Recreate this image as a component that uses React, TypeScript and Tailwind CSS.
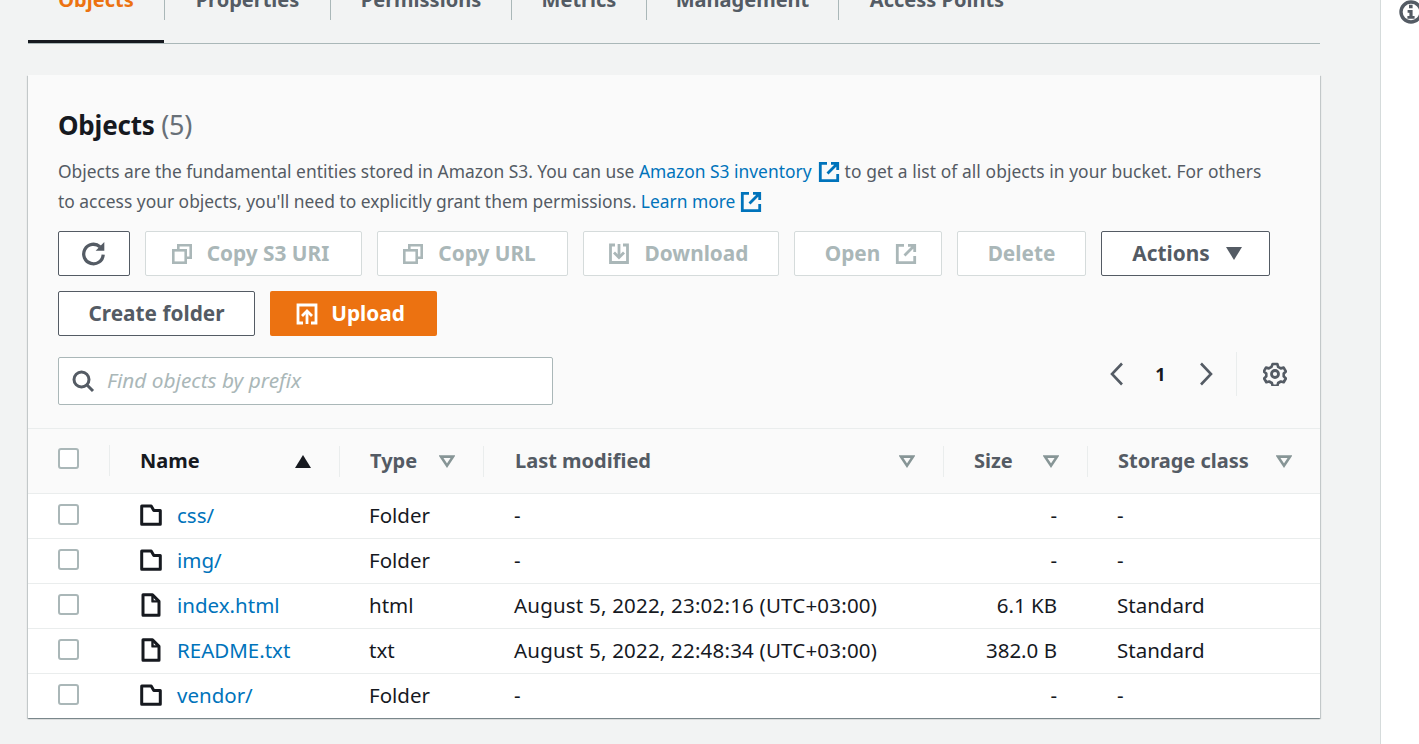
import React from 'react';

const tabs = [
  { label: 'Objects', w: 'w-[137px]', active: true },
  { label: 'Properties', w: 'w-[166px]' },
  { label: 'Permissions', w: 'w-[181px]' },
  { label: 'Metrics', w: 'w-[135px]' },
  { label: 'Management', w: 'w-[192px]' },
  { label: 'Access Points', w: 'w-[196px]' },
];

const rows = [
  { name: 'css/', type: 'Folder', modified: '-', size: '-', storage: '-', folder: true },
  { name: 'img/', type: 'Folder', modified: '-', size: '-', storage: '-', folder: true },
  { name: 'index.html', type: 'html', modified: 'August 5, 2022, 23:02:16 (UTC+03:00)', size: '6.1 KB', storage: 'Standard', folder: false },
  { name: 'README.txt', type: 'txt', modified: 'August 5, 2022, 22:48:34 (UTC+03:00)', size: '382.0 B', storage: 'Standard', folder: false },
  { name: 'vendor/', type: 'Folder', modified: '-', size: '-', storage: '-', folder: true },
];

const ExternalIcon = ({ className }: { className?: string }) => (
  <svg viewBox="0 0 22 22" fill="none" stroke="currentColor" strokeWidth="2.8" className={className}>
    <path d="M9 2.3H2.3v17.4h17.4V13" />
    <path d="M13 2.3h6.7V9M19.7 2.3 9.5 12.5" />
  </svg>
);

const CopyIcon = () => (
  <svg viewBox="0 0 20 20" fill="none" stroke="currentColor" strokeWidth="2.6" className="w-5 h-5 shrink-0">
    <rect x="1.3" y="6.3" width="12.4" height="12.4" />
    <path d="M6.3 6V1.3h12.4v12.4H14" />
  </svg>
);

const CheckBox = () => <div className="w-[21px] h-[21px] bg-white border-2 border-[#aab7b8] rounded-[3px]" />;

const FilterCaret = () => (
  <svg viewBox="0 0 16 13" className="w-4 h-[13px]" fill="none" stroke="#879596" strokeWidth="2.6">
    <path d="M2 1.6h12L8 10.6z" />
  </svg>
);

const FolderIcon = () => (
  <svg viewBox="0 0 22 22" fill="none" stroke="#16191f" strokeWidth="3" strokeLinejoin="round" className="w-[22px] h-[22px]">
    <path d="M1.7 2h9.5l2.6 4.4h6.5v13.8H1.7z" />
  </svg>
);

const FileIcon = () => (
  <svg viewBox="0 0 20 24" fill="none" stroke="#16191f" strokeWidth="3" strokeLinejoin="round" className="w-5 h-6">
    <path d="M2 1.7h9.5L18 8.4v13.9H2z" />
    <path d="M11.5 2v6.4H18" strokeWidth="2.4" />
  </svg>
);

const App: React.FC = () => {
  return (
    <div className="w-[1419px] h-[744px] overflow-hidden flex font-['Noto_Sans',sans-serif] text-[#16191f]">
      <div className="w-[1380px] shrink-0 bg-[#f2f3f3] pl-7 pr-[60px]">
        <div className="h-11 border-b border-[#aab7b8] relative flex items-start">
          {tabs.map((tab, i) => (
            <div
              key={tab.label}
              className={`${tab.w} h-5 flex items-center justify-center text-[20px] font-bold leading-none ${i < tabs.length - 1 ? 'border-r border-[#aab7b8]' : ''} ${tab.active ? 'text-[#ec7211]' : 'text-[#545b64]'}`}
            >
              <span className="-translate-y-[10px]">{tab.label}</span>
            </div>
          ))}
          <div className="absolute left-0 bottom-0 w-[136px] h-[3px] bg-[#16191f]" />
        </div>

        <div className="mt-[31px] bg-white shadow-[0_1px_1px_0_rgba(0,28,36,0.3),1px_1px_1px_0_rgba(0,28,36,0.15),-1px_1px_1px_0_rgba(0,28,36,0.15)]">
          <div className="bg-[#fafafa] h-[354px] pl-[30px] pr-[33px] pt-[32px] border-b border-[#eaeded]">
            <h1 className="text-[26px] leading-9 font-bold tracking-[-0.2px]">
              Objects <span className="font-normal text-[#687078] text-[27px]">(5)</span>
            </h1>
            <p className="mt-[13px] text-[17.4px] leading-[30px] text-[#545b64] w-[1215px]">
              Objects are the fundamental entities stored in Amazon S3. You can use{' '}
              <span className="text-[#0073bb]">
                Amazon S3 inventory <ExternalIcon className="inline w-[22px] h-[22px] align-[-5px] ml-[2px]" />
              </span>{' '}
              <span className="tracking-[0.08px]">to get a list of all objects in your bucket. For others</span> to access your objects, you'll need to explicitly grant them permissions.{' '}
              <span className="text-[#0073bb]">
                Learn more <ExternalIcon className="inline w-[22px] h-[22px] align-[-5px]" />
              </span>
            </p>

            <div className="mt-[15px] flex gap-[15px] text-[20.8px] font-bold">
              <button className="w-[72px] h-[45px] flex items-center justify-center bg-white border border-[#545b64] rounded-[2px] text-[#545b64]">
                <svg viewBox="0 0 24 24" fill="none" stroke="currentColor" strokeWidth="3" className="w-[26px] h-[26px]">
                  <path d="M20.5 12.5a9 9 0 1 1-3-7.2" />
                  <path d="M21.5 1v8h-8" fill="currentColor" stroke="none" />
                </svg>
              </button>
              <button className="w-[217px] h-[45px] pr-[6px] flex items-center justify-center gap-[15px] bg-white border border-[#d5dbdb] rounded-[2px] text-[#aab7b8]">
                <CopyIcon /><span>Copy S3 URI</span>
              </button>
              <button className="w-[191px] h-[45px] pr-[6px] flex items-center justify-center gap-[15px] bg-white border border-[#d5dbdb] rounded-[2px] text-[#aab7b8]">
                <CopyIcon /><span>Copy URL</span>
              </button>
              <button className="w-[196px] h-[45px] pr-[6px] flex items-center justify-center gap-[15px] bg-white border border-[#d5dbdb] rounded-[2px] text-[#aab7b8]">
                <svg viewBox="0 0 22 22" fill="none" stroke="currentColor" strokeWidth="2.8" className="w-[22px] h-[22px] shrink-0">
                  <path d="M7 2H2.5v17.5h17V2H15" />
                  <path d="M11 1v12" />
                  <path d="M6 9.5l5 5 5-5" />
                </svg>
                <span>Download</span>
              </button>
              <button className="w-[148px] h-[45px] pl-[6px] flex items-center justify-center gap-[15px] bg-white border border-[#d5dbdb] rounded-[2px] text-[#aab7b8]">
                <span>Open</span><ExternalIcon className="w-[22px] h-[22px]" />
              </button>
              <button className="w-[129px] h-[45px] flex items-center justify-center bg-white border border-[#d5dbdb] rounded-[2px] text-[#aab7b8]">
                Delete
              </button>
              <button className="w-[169px] h-[45px] pl-[3px] flex items-center justify-center gap-[16px] bg-white border border-[#545b64] rounded-[2px] text-[#545b64]">
                <span>Actions</span>
                <svg viewBox="0 0 16 13" className="w-4 h-[13px]" fill="currentColor"><path d="M0 0h16L8 13z" /></svg>
              </button>
            </div>

            <div className="mt-[15px] flex gap-[15px] text-[20.8px] font-bold">
              <button className="w-[197px] h-[45px] bg-white border border-[#545b64] rounded-[2px] text-[#545b64]">Create folder</button>
              <button className="w-[167px] h-[45px] pr-[6px] flex items-center justify-center gap-[13px] bg-[#ec7211] rounded-[2px] text-white">
                <svg viewBox="0 0 22 22" fill="none" stroke="currentColor" strokeWidth="2.8" className="w-[22px] h-[22px] shrink-0">
                  <path d="M7 20H2V2h18v18h-5" />
                  <path d="M11 21V9" />
                  <path d="M6 13l5-5 5 5" />
                </svg>
                <span>Upload</span>
              </button>
            </div>

            <div className="mt-[21px] flex items-start justify-between">
              <div className="w-[495px] h-12 flex items-center gap-3 bg-white border border-[#aab7b8] rounded-[2px] pl-[12px]">
                <svg viewBox="0 0 24 24" fill="none" stroke="#545b64" strokeWidth="3" className="w-6 h-6 shrink-0">
                  <circle cx="10.5" cy="10.5" r="7.5" />
                  <path d="M16 16l6 6" />
                </svg>
                <span className="text-[20.8px] italic text-[#aab7b8]">Find objects by prefix</span>
              </div>
              <div className="flex items-center h-11 -mt-[5px]">
                <svg viewBox="0 0 16 24" fill="none" stroke="#545b64" strokeWidth="2.6" className="w-4 h-6">
                  <path d="M13 1.5 3 12l10 10.5" />
                </svg>
                <span className="w-[73px] pr-[2px] text-center text-[18px] font-bold text-[#16191f]">1</span>
                <svg viewBox="0 0 16 24" fill="none" stroke="#545b64" strokeWidth="2.6" className="w-4 h-6">
                  <path d="M3 1.5 13 12 3 22.5" />
                </svg>
                <div className="ml-[22px] w-px h-11 bg-[#eaeded]" />
                <svg viewBox="0 0 24 24" fill="none" stroke="#545b64" strokeWidth="2.8" strokeLinejoin="round" className="ml-[26px] w-6 h-6">
                  <path d="M9.5 1.5h5l.8 3 2.8 1.6 3-.8 2.3 4-2.2 2.2v3l2.2 2.2-2.3 4-3-.8-2.8 1.6-.8 3h-5l-.8-3-2.8-1.6-3 .8-2.3-4 2.2-2.2v-3L.2 9.3l2.3-4 3 .8 2.8-1.6z" transform="translate(0.6 0.6) scale(0.95)" />
                  <circle cx="12" cy="12" r="3.5" />
                </svg>
              </div>
            </div>
          </div>

          <div className="grid grid-cols-[82px_230px_144px_460px_144px_1fr] h-[65px] items-center bg-[#fafafa] border-b border-[#eaeded] text-[20px] font-bold text-[#545b64]">
            <div className="h-[31px] border-r border-[#eaeded] pl-[30px] pt-[3px] flex items-start -mt-px"><CheckBox /></div>
            <div className="h-[31px] border-r border-[#eaeded] pl-[30px] pr-[28px] flex items-center justify-between text-[#16191f]">
              <span>Name</span>
              <svg viewBox="0 0 16 13" className="w-4 h-[13px]" fill="#16191f"><path d="M8 0l8 13H0z" /></svg>
            </div>
            <div className="h-[31px] border-r border-[#eaeded] pl-[30px] pr-[28px] flex items-center justify-between"><span>Type</span><FilterCaret /></div>
            <div className="h-[31px] border-r border-[#eaeded] pl-[31px] pr-[28px] flex items-center justify-between"><span>Last modified</span><FilterCaret /></div>
            <div className="h-[31px] border-r border-[#eaeded] pl-[30px] pr-[28px] flex items-center justify-between"><span>Size</span><FilterCaret /></div>
            <div className="h-[31px] pl-[30px] pr-[28px] flex items-center justify-between"><span>Storage class</span><FilterCaret /></div>
          </div>

          {rows.map((row, i) => (
            <div
              key={row.name}
              className={`grid grid-cols-[82px_230px_144px_460px_144px_1fr] items-center pb-[2px] text-[20.5px] ${i < rows.length - 1 ? 'h-[45px] border-b border-[#eaeded]' : 'h-[44px]'}`}
            >
              <div className="pl-[30px] -mt-0.5"><CheckBox /></div>
              <div className="pl-[30px] flex items-center">
                <span className={`w-[37px] flex ${row.folder ? '' : 'pl-px'}`}>{row.folder ? <FolderIcon /> : <FileIcon />}</span>
                <span className="text-[#0073bb]">{row.name}</span>
              </div>
              <div className="pl-[29px]">{row.type}</div>
              <div className="pl-[30px] whitespace-nowrap tracking-[0.2px]">{row.modified}</div>
              <div className="pr-[31px] text-right">{row.size}</div>
              <div className="pl-[29px]">{row.storage}</div>
            </div>
          ))}
        </div>
      </div>

      <div className="flex-1 min-w-0 bg-white border-l border-[#d5dbdb] relative overflow-hidden">
        <svg viewBox="0 0 24 24" className="absolute left-[18px] top-0 w-6 h-6" fill="none" stroke="#545b64" strokeWidth="3.4">
          <circle cx="12" cy="12" r="10" />
          <path d="M10 4.8h3.6v3.4H10zM8.6 10h5v6h2v2.8H8.4V16h2v-3.2H8.6z" fill="#545b64" stroke="none" />
        </svg>
      </div>
    </div>
  );
};

export default App;
